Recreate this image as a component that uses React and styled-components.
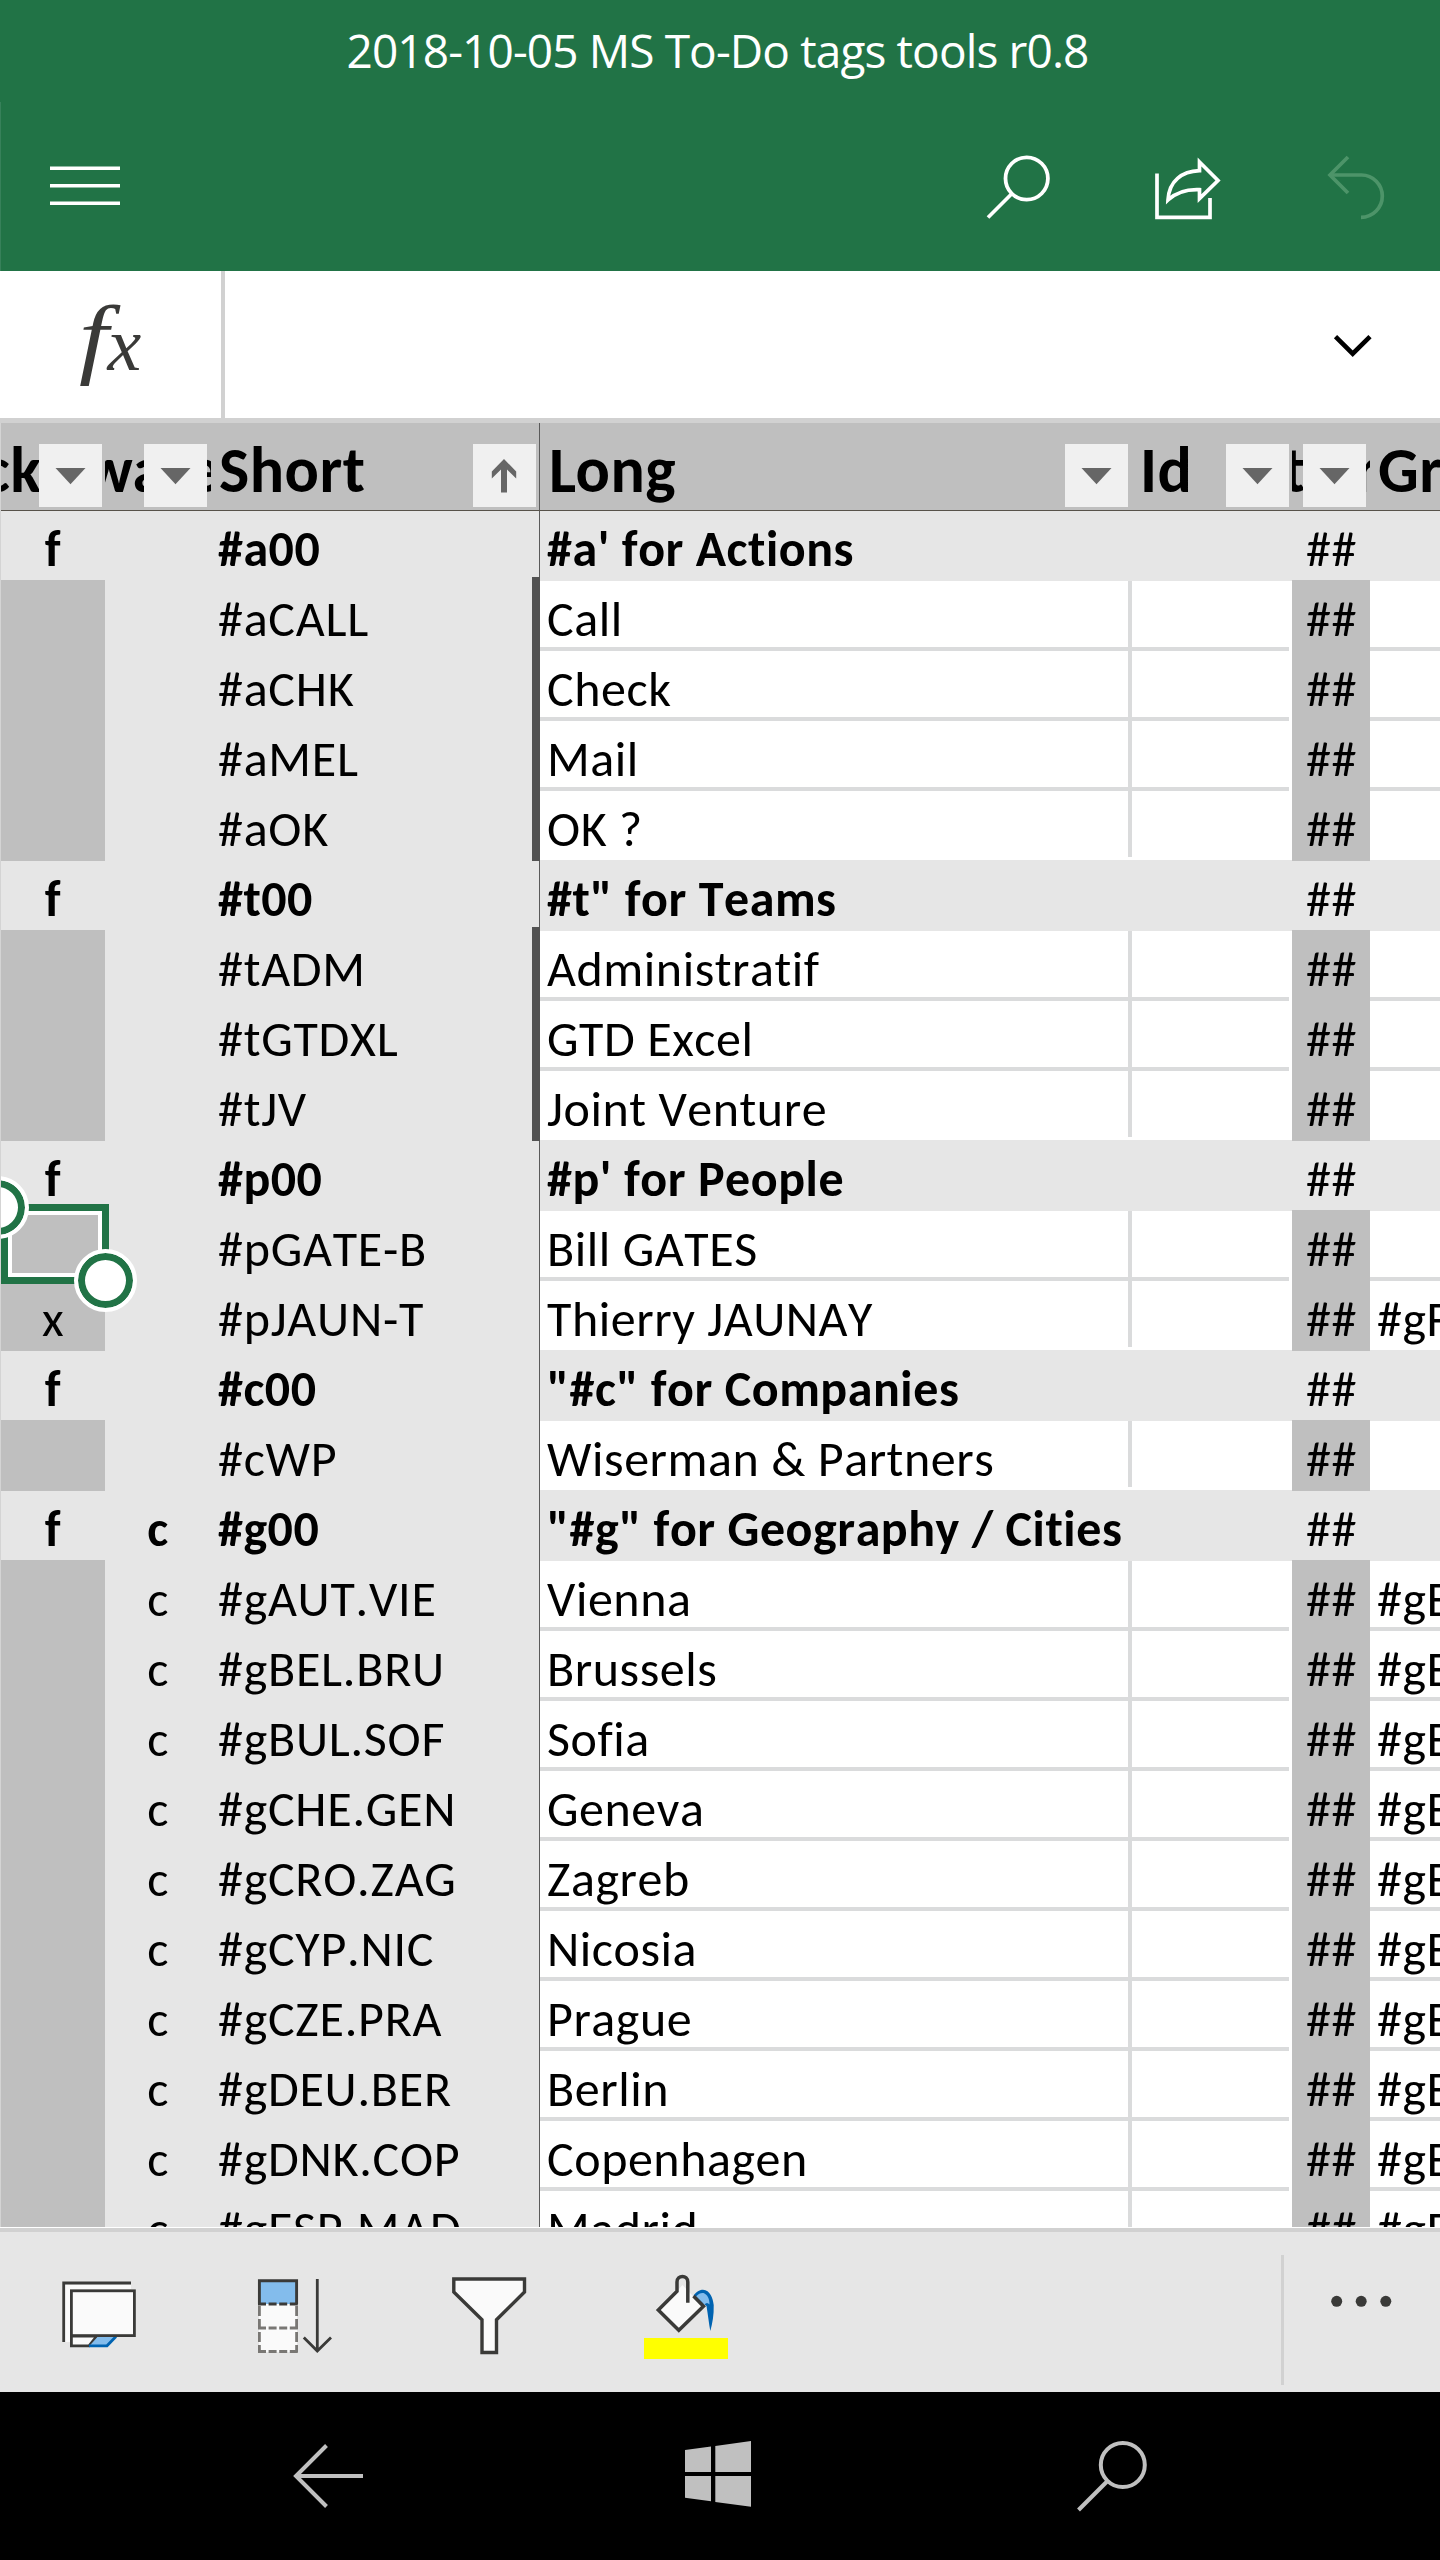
import React from "react";
import styled, { createGlobalStyle, css } from "styled-components";

const GlobalStyle = createGlobalStyle`
  *, *::before, *::after { box-sizing: border-box; }
  body { margin: 0; background: #000; overflow: hidden; }
  svg { display: block; flex: none; }
`;

const Phone = styled.div`
  width: 1440px;
  height: 2560px;
  display: flex;
  flex-direction: column;
  overflow: hidden;
  background: #fff;
  font-family: Carlito, Calibri, Lato, "Liberation Sans", sans-serif;
  color: #000;
`;

/* Title and app bar */

const TitleBar = styled.header`
  height: 102px;
  flex: none;
  display: flex;
  justify-content: center;
  background: #217346;
  color: #fff;
  font: 400 46px/100px "Open Sans", "Noto Sans", sans-serif;
  letter-spacing: -0.88px;
  padding-right: 5px;
`;

const AppBar = styled.nav`
  height: 169px;
  flex: none;
  display: flex;
  align-items: center;
  padding: 0 50px 0 49px;
  background: #217346;
  border: solid #37815a;
  border-width: 0 0 0 1px;
  color: #fff;
`;

const BarButton = styled.button`
  border: 0;
  padding: 0;
  background: none;
  color: inherit;
  margin-left: ${(p) => p.$gap || 0}px;
  margin-right: ${(p) => (p.$push ? "auto" : 0)};
`;

/* Formula bar */

const FormulaBar = styled.div`
  height: 152px;
  flex: none;
  display: flex;
  background: #fff;
  border-bottom: 4px solid #d1d1d1;
  box-shadow: inset 0 -1px 0 #d1d1d1;
`;

const FunctionButton = styled.div`
  width: 225px;
  display: flex;
  padding-left: 79px;
  border-right: 4px solid #d1d1d1;
  color: #3a3a38;
  font-family: "Liberation Serif", serif;
  font-style: italic;
  line-height: 133px;
`;

const LetterF = styled.span`
  font-size: 88px;
  transform: scaleX(1.2);
  transform-origin: left;
`;

const LetterX = styled.span`
  font-size: 76px;
  margin: 7px 0 0 4px;
`;

const FormulaInput = styled.div`
  flex: 1;
  display: flex;
  align-items: center;
  justify-content: flex-end;
  padding-right: 64px;
`;

/* Sheet */

const Sheet = styled.main`
  height: 1804px;
  flex: none;
  overflow: hidden;
  border-left: 1px solid #d4d4d4;
`;

const columns = css`
  display: grid;
  grid-template-columns: 104px 106px 329px 592px 157px 3px 78px 70px;
`;

const HeaderRow = styled.div`
  ${columns}
  position: relative;
  z-index: 1;
  height: 88px;
  background: #bfbfbf;
  border-bottom: 1px solid #57524a;
  font-weight: 700;
  font-size: 64px;
  line-height: 95px;
  letter-spacing: 0.5px;
`;

const HeaderCell = styled.div`
  position: relative;
  overflow: hidden;
  white-space: nowrap;
  text-indent: ${(p) => p.$indent || 0}px;
  border-right: ${(p) => (p.$frozen ? "1px solid #5a5a5a" : "0")};
`;

const FilterButton = styled.button`
  position: absolute;
  top: 21px;
  right: ${(p) => p.$right}px;
  width: 63px;
  height: 63px;
  padding: 0;
  border: 0;
  background: #f0f0f0;
`;

const Row = styled.div`
  ${columns}
  height: 70px;
  font-size: 50px;
  line-height: 76px;
  font-kerning: none;
  letter-spacing: 0.55px;
  background: ${(p) => (p.$group ? "#e6e6e6" : "#fff")};
  box-shadow: ${(p) => (p.$group ? "0 -1px 0 #e6e6e6" : "none")};
`;

const Cell = styled.div`
  height: 70px;
  white-space: nowrap;
  font-weight: ${(p) => (p.$bold ? 700 : 400)};
`;

const MarkCell = styled(Cell)`
  position: relative;
  text-align: center;
  background: ${(p) => (p.$shade ? "#bfbfbf" : "#e6e6e6")};
  box-shadow: ${(p) => (p.$shade ? "0 -1px 0 #bfbfbf" : "none")};
`;

const ShortCell = styled(Cell)`
  position: relative;
  padding-left: 7px;
  letter-spacing: ${(p) => (p.$bold ? 0.5 : 0.75)}px;
  background: #e6e6e6;
  border-right: 1px solid #5a5a5a;
  &::after {
    content: "";
    display: ${(p) => (p.$bar ? "block" : "none")};
    position: absolute;
    top: -4px;
    bottom: 0;
    right: -1px;
    width: 8px;
    background: #525252;
  }
`;

const gridLine = css`
  border-bottom: 4px solid ${(p) => (p.$line ? "#dadbdc" : "transparent")};
`;

const LongCell = styled(Cell)`
  ${gridLine}
  padding-left: 7px;
  background: ${(p) =>
    p.$group
      ? "none"
      : `linear-gradient(#dadbdc, #dadbdc) right top / 4px ${p.$line ? "70px" : "66px"} no-repeat border-box`};
`;

const IdCell = styled(Cell)`
  ${gridLine}
`;

const CodeCell = styled(Cell)`
  padding-left: 14px;
  background: ${(p) => (p.$group ? "none" : "#bfbfbf")};
  box-shadow: ${(p) => (p.$group ? "none" : "0 -1px 0 #bfbfbf")};
`;

const GroupCell = styled(Cell)`
  ${gridLine}
  padding-left: 7px;
`;

const Selection = styled.div`
  position: absolute;
  z-index: 2;
  top: -7px;
  left: 0;
  width: 108px;
  height: 80px;
  border: 7px solid #217346;
  box-shadow: inset 0 0 0 4px #fff;
`;

const Handle = styled.span`
  position: absolute;
  left: ${(p) => (p.$end ? "66px" : "-42px")};
  top: ${(p) => (p.$end ? "38px" : "-35px")};
  width: 63px;
  height: 63px;
  border-radius: 50%;
  background: #fff;
  border: 4px solid #fff;
  box-shadow: inset 0 0 0 7px #217346;
`;

/* Bottom bars */

const SheetEdge = styled.div`
  height: 5px;
  flex: none;
  border-top: 1px solid #fff;
  background: #d1d1d1;
`;

const Toolbar = styled.div`
  height: 160px;
  flex: none;
  display: flex;
  align-items: center;
  padding: 0 44px 0 58px;
  background: #e6e6e6;
`;

const Separator = styled.div`
  width: 3px;
  height: 130px;
  margin: 23px 0 0 auto;
  align-self: flex-start;
  background: #d1d1d1;
`;

const SystemNav = styled.footer`
  height: 168px;
  flex: none;
  display: flex;
  align-items: center;
  padding-left: 290px;
  background: #000;
`;

/* Icons */

const Art = ({ box, children }) => {
  const [, , w, h] = box;
  return (
    <svg width={w} height={h} viewBox={box.join(" ")} fill="none">
      {children}
    </svg>
  );
};

const MenuIcon = () => (
  <Art box={[50, 146.5, 70, 80]}>
    <path d="M50 167.8H120M50 185.2H120M50 202.8H120" stroke="#fff" strokeWidth="3.6" />
  </Art>
);

const SearchIcon = () => (
  <Art box={[984, 146.5, 72, 80]}>
    <circle cx="1026.7" cy="178" r="21.2" stroke="#fff" strokeWidth="3.8" />
    <path d="M1012 193L988 217" stroke="#fff" strokeWidth="3.8" />
  </Art>
);

const ShareIcon = () => (
  <Art box={[1150, 146.5, 76, 80]}>
    <g stroke="#fff" strokeWidth="3.7">
      <path d="M1157 173V216.8H1210V197.5" />
      <path d="M1199.5 161.5L1218 180L1199.5 198V189.2C1186 188.6 1176 192 1168 199.5C1169 180 1182 171 1199.5 170.2Z" />
    </g>
  </Art>
);

const UndoIcon = () => (
  <Art box={[1324, 146.5, 66, 80]}>
    <g stroke="#4d9469" strokeWidth="3.7">
      <path d="M1348 156.5L1330 174.5L1348 192.5" />
      <path d="M1330 174.5H1361.5C1373 174.5 1382.3 184 1382.3 195.5S1373 216.8 1361 216.8" />
    </g>
  </Art>
);

const ChevronIcon = () => (
  <Art box={[1330, 325, 46, 40]}>
    <path d="M1335.5 336.7L1352.7 353.7L1370 336.7" stroke="#000" strokeWidth="4.6" />
  </Art>
);

const TriangleIcon = () => (
  <Art box={[0, 0, 63, 63]}>
    <path d="M16.5 24H46.5L31.5 40.3Z" fill="#666" />
  </Art>
);

const SortedIcon = () => (
  <Art box={[0, 0, 63, 63]}>
    <path d="M31 15L43.2 27.5V34.5L34 25.5V48.5H28V25.5L18.8 34.5V27.5Z" fill="#666" />
  </Art>
);

const ViewIcon = () => (
  <Art box={[58, 2262, 84, 100]}>
    <path d="M65 2284.500H131V2289H70V2342H65Z" fill="#fafafa" />
    <path d="M63.700 2342V2283H131" stroke="#3a3a38" strokeWidth="2.800" />
    <path d="M71.400 2336V2345.800H89L97 2336Z" fill="#fafafa" stroke="#3a3a38" strokeWidth="2.800" />
    <path d="M97.500 2337H116L107 2345.800H89.500Z" fill="#83bcec" />
    <path d="M116 2336.500L107 2345.800H89" stroke="#0063b1" strokeWidth="2.800" />
    <rect x="71.400" y="2290.800" width="63" height="44.800" fill="#fafafa" stroke="#3a3a38" strokeWidth="2.800" />
  </Art>
);

const FillDownIcon = () => (
  <Art box={[252, 2262, 84, 100]}>
    <rect x="259" y="2304" width="38" height="48" fill="#fafafa" />
    <path d="M259.400 2306V2352M296.600 2306V2352" stroke="#797774" strokeWidth="2.800" strokeDasharray="10 3" />
    <path d="M258 2328H298M258 2351.500H298" stroke="#797774" strokeWidth="2.800" strokeDasharray="8 2.600" />
    <rect x="259" y="2280" width="38" height="24" fill="#83bcec" />
    <path d="M259.400 2304V2280.700H296.600V2304" stroke="#3a3a38" strokeWidth="2.900" />
    <path d="M258 2304H298" stroke="#3a3a38" strokeWidth="2.900" strokeDasharray="8 2.600" />
    <path d="M317.300 2279V2350.500M303.800 2337.500L317.300 2351L331 2337.500" stroke="#3a3a38" strokeWidth="2.800" />
  </Art>
);

const FunnelIcon = () => (
  <Art box={[448, 2262, 84, 100]}>
    <path
      d="M453.800 2279H524.500V2292L496.500 2319.800V2352.500H482V2319.800L453.800 2292Z"
      fill="#fafafa"
      stroke="#3a3a38"
      strokeWidth="3.400"
    />
  </Art>
);

const FillColorIcon = () => (
  <Art box={[640, 2262, 92, 100]}>
    <rect x="644" y="2338" width="84" height="21" fill="#ff0" />
    <path d="M693.500 2295.500C697 2291 700 2289.700 703 2289.700C710 2290 713 2298 713.700 2305C714 2315 712.500 2323 710.300 2331C709 2324 708 2315 706.500 2306Z" fill="#0063b1" />
    <path d="M696 2296.500C698.500 2293.500 701 2292.700 703.500 2293C707.500 2294.500 709.500 2299 709.500 2304.500C708 2302.500 706 2302.500 704.500 2304.500Z" fill="#83bcec" />
    <path d="M658.300 2310L677 2291.200L682.500 2285L688 2291L702.500 2305.500L678.800 2330.300Z" fill="#fafafa" />
    <path
      d="M687.800 2302.800V2282C687.800 2274.700 677 2274.700 677 2282V2291.200L658.300 2310L678.800 2330.300L703.500 2306.200L693.500 2296"
      stroke="#3a3a38"
      strokeWidth="3.500"
    />
  </Art>
);

const MoreIcon = () => (
  <Art box={[1326, 2262, 70, 100]}>
    <g fill="#3a3a38">
      <circle cx="1336.700" cy="2301.300" r="5.500" />
      <circle cx="1361.200" cy="2301.300" r="5.500" />
      <circle cx="1385.800" cy="2301.300" r="5.500" />
    </g>
  </Art>
);

const BackIcon = () => (
  <Art box={[290, 2436, 76, 80]}>
    <path d="M326.500 2445.500L296 2476L326.500 2506.500M296 2476H363" stroke="#c0c0c0" strokeWidth="4" />
  </Art>
);

const WindowsIcon = () => (
  <Art box={[684, 2436, 68, 80]}>
    <path
      d="M685 2450L711 2446.500V2472H685ZM715.300 2446L751 2441V2472H715.300ZM685 2476H711V2501.300L685 2497.700ZM715.300 2476H751V2506.700L715.300 2502Z"
      fill="#c0c0c0"
    />
  </Art>
);

const NavSearchIcon = () => (
  <Art box={[1074, 2436, 74, 80]}>
    <circle cx="1122.800" cy="2465" r="22" stroke="#c0c0c0" strokeWidth="4" />
    <path d="M1107 2481.500L1078.500 2510" stroke="#c0c0c0" strokeWidth="4" />
  </Art>
);

/* Data */

const headers = [
  { text: "ck", indent: -18, right: 3 },
  { text: "ware", indent: -20, right: 4 },
  { text: "Short", indent: 8, right: 3, sorted: true, frozen: true },
  { text: "Long", indent: 9, right: 4 },
  { text: "Id", indent: 8, right: 0 },
  { spacer: true },
  { text: "tler", indent: -9, right: 4 },
  { text: "Gr", indent: 8 },
];

const city = (short, long) => ({ flag: "c", short, long, group: "#gE" });

const sections = [
  {
    short: "#a00",
    long: "#a' for Actions",
    bar: true,
    rows: [
      { short: "#aCALL", long: "Call" },
      { short: "#aCHK", long: "Check" },
      { short: "#aMEL", long: "Mail" },
      { short: "#aOK", long: "OK ?" },
    ],
  },
  {
    short: "#t00",
    long: '#t" for Teams',
    bar: true,
    rows: [
      { short: "#tADM", long: "Administratif" },
      { short: "#tGTDXL", long: "GTD Excel" },
      { short: "#tJV", long: "Joint Venture" },
    ],
  },
  {
    short: "#p00",
    long: "#p' for People",
    rows: [
      { short: "#pGATE-B", long: "Bill GATES", selected: true },
      { mark: "x", short: "#pJAUN-T", long: "Thierry JAUNAY", group: "#gF" },
    ],
  },
  {
    short: "#c00",
    long: '"#c" for Companies',
    rows: [{ short: "#cWP", long: "Wiserman & Partners" }],
  },
  {
    flag: "c",
    short: "#g00",
    long: '"#g" for Geography / Cities',
    rows: [
      city("#gAUT.VIE", "Vienna"),
      city("#gBEL.BRU", "Brussels"),
      city("#gBUL.SOF", "Sofia"),
      city("#gCHE.GEN", "Geneva"),
      city("#gCRO.ZAG", "Zagreb"),
      city("#gCYP.NIC", "Nicosia"),
      city("#gCZE.PRA", "Prague"),
      city("#gDEU.BER", "Berlin"),
      city("#gDNK.COP", "Copenhagen"),
      city("#gESP.MAD", "Madrid"),
    ],
  },
];

const SectionRow = ({ section }) => (
  <Row $group>
    <MarkCell $bold>f</MarkCell>
    <MarkCell $bold>{section.flag}</MarkCell>
    <ShortCell $bold>{section.short}</ShortCell>
    <LongCell $bold $group>{section.long}</LongCell>
    <IdCell />
    <Cell />
    <CodeCell $group>##</CodeCell>
    <GroupCell />
  </Row>
);

const TagRow = ({ row, bar, last }) => (
  <Row>
    <MarkCell $shade>
      {row.mark}
      {row.selected && (
        <Selection>
          <Handle />
          <Handle $end />
        </Selection>
      )}
    </MarkCell>
    <MarkCell>{row.flag}</MarkCell>
    <ShortCell $bar={bar}>{row.short}</ShortCell>
    <LongCell $line={!last}>{row.long}</LongCell>
    <IdCell $line={!last} />
    <Cell />
    <CodeCell>##</CodeCell>
    <GroupCell $line={!last}>{row.group}</GroupCell>
  </Row>
);

export default function App() {
  return (
    <Phone>
      <GlobalStyle />
      <TitleBar>2018-10-05 MS To-Do tags tools r0.8</TitleBar>
      <AppBar>
        <BarButton $push><MenuIcon /></BarButton>
        <BarButton><SearchIcon /></BarButton>
        <BarButton $gap={94}><ShareIcon /></BarButton>
        <BarButton $gap={98}><UndoIcon /></BarButton>
      </AppBar>
      <FormulaBar>
        <FunctionButton>
          <LetterF>f</LetterF>
          <LetterX>x</LetterX>
        </FunctionButton>
        <FormulaInput><ChevronIcon /></FormulaInput>
      </FormulaBar>
      <Sheet>
        <HeaderRow>
          {headers.map((h, i) => (
            <HeaderCell key={i} $indent={h.indent} $frozen={h.frozen}>
              {h.text}
              {h.right !== undefined && (
                <FilterButton $right={h.right}>
                  {h.sorted ? <SortedIcon /> : <TriangleIcon />}
                </FilterButton>
              )}
            </HeaderCell>
          ))}
        </HeaderRow>
        {sections.map((section) => (
          <React.Fragment key={section.short}>
            <SectionRow section={section} />
            {section.rows.map((row, i) => (
              <TagRow
                key={row.short}
                row={row}
                bar={section.bar}
                last={i === section.rows.length - 1}
              />
            ))}
          </React.Fragment>
        ))}
      </Sheet>
      <SheetEdge />
      <Toolbar>
        <BarButton><ViewIcon /></BarButton>
        <BarButton $gap={110}><FillDownIcon /></BarButton>
        <BarButton $gap={112}><FunnelIcon /></BarButton>
        <BarButton $gap={108}><FillColorIcon /></BarButton>
        <Separator />
        <BarButton $gap={42}><MoreIcon /></BarButton>
      </Toolbar>
      <SystemNav>
        <BarButton><BackIcon /></BarButton>
        <BarButton $gap={318}><WindowsIcon /></BarButton>
        <BarButton $gap={322}><NavSearchIcon /></BarButton>
      </SystemNav>
    </Phone>
  );
}
